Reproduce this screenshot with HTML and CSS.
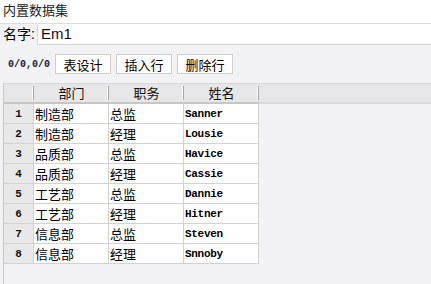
FILE: index.html
```html
<!DOCTYPE html>
<html lang="zh">
<head>
    <meta charset="UTF-8">
    <title>内置数据集</title>
    <link rel="stylesheet" href="styles.css">
</head>
<body>
    <div class="title">内置数据集</div>

    <div class="name-row">
        <label class="name-label">名字:</label>
        <div class="name-input">Em1</div>
    </div>

    <div class="toolbar">
        <span class="pos">0/0,0/0</span>
        <button class="btn">表设计</button>
        <button class="btn">插入行</button>
        <button class="btn">删除行</button>
    </div>

    <div class="grid">
        <div class="grid-head">
            <div class="hcell corner"></div>
            <div class="hcell">部门</div>
            <div class="hcell">职务</div>
            <div class="hcell">姓名</div>
            <div class="hrest"></div>
        </div>
        <div class="row"><div class="num">1</div><div class="cell">制造部</div><div class="cell">总监</div><div class="cell en">Sanner</div></div>
        <div class="row"><div class="num">2</div><div class="cell">制造部</div><div class="cell">经理</div><div class="cell en">Lousie</div></div>
        <div class="row"><div class="num">3</div><div class="cell">品质部</div><div class="cell">总监</div><div class="cell en">Havice</div></div>
        <div class="row"><div class="num">4</div><div class="cell">品质部</div><div class="cell">经理</div><div class="cell en">Cassie</div></div>
        <div class="row"><div class="num">5</div><div class="cell">工艺部</div><div class="cell">总监</div><div class="cell en">Dannie</div></div>
        <div class="row"><div class="num">6</div><div class="cell">工艺部</div><div class="cell">经理</div><div class="cell en">Hitner</div></div>
        <div class="row"><div class="num">7</div><div class="cell">信息部</div><div class="cell">总监</div><div class="cell en">Steven</div></div>
        <div class="row"><div class="num">8</div><div class="cell">信息部</div><div class="cell">经理</div><div class="cell en">Snnoby</div></div>
    </div>
</body>
</html>
```

FILE: styles.css
```css
* {
    margin: 0;
    padding: 0;
    box-sizing: border-box;
}

body {
    background-color: #f2f2f4;
    font-family: 'Liberation Sans', 'Noto Sans CJK SC', sans-serif;
    color: #000;
    height: 284px;
    overflow: hidden;
}

.title {
    height: 24px;
    line-height: 22px;
    padding-left: 3px;
    font-size: 13px;
    color: #222;
    background-color: #fff;
    border-bottom: 1px solid #dcdcdc;
}

.name-row {
    display: flex;
    align-items: stretch;
    height: 21px;
}

.name-label {
    width: 37px;
    padding-left: 3px;
    font-size: 14px;
    line-height: 20px;
}

.name-input {
    flex: 1;
    background-color: #fff;
    border-left: 1px solid #dadada;
    border-bottom: 1px solid #d4d4d4;
    padding-left: 3px;
    font-size: 15px;
    line-height: 20px;
    color: #1a0a0a;
}

.toolbar {
    display: flex;
    align-items: center;
    padding: 9px 0 0 8px;
    height: 29px;
}

.pos {
    width: 47px;
    font-family: 'Liberation Mono', monospace;
    font-size: 10px;
    font-weight: bold;
    color: #102040;
}

.btn {
    width: 56px;
    height: 20px;
    margin-right: 5px;
    background-color: #fff;
    border: 1px solid #cfcfcf;
    font-family: 'Noto Sans CJK SC', sans-serif;
    font-size: 13px;
    line-height: 17px;
    color: #000;
}

.grid {
    margin: 9px 0 0 3px;
    height: 201px;
    border-left: 1px solid #c8c8c8;
    border-top: 1px solid #d8d8d8;
}

.grid-head {
    display: flex;
    height: 20px;
    background-color: #e6e6e6;
}

.hcell {
    position: relative;
    width: 75px;
    height: 20px;
    text-align: center;
    font-family: 'Noto Sans CJK SC', sans-serif;
    font-size: 13px;
    line-height: 18px;
    color: #111;
    border-bottom: 2px solid #c6c6c6;
}

.hcell.corner {
    width: 30px;
}

.hcell::after {
    content: '';
    position: absolute;
    right: 0;
    top: 2px;
    height: 14px;
    width: 1px;
    background-color: #a8a8a8;
    box-shadow: -1px 0 0 #fafafa;
}

.hrest {
    flex: 1;
    border-bottom: 2px solid #dadada;
}

.row {
    display: flex;
    height: 20px;
}

.num {
    width: 30px;
    background-color: #e8e8e8;
    border-right: 1px solid #d2d2d2;
    border-bottom: 1px solid #d2d2d2;
    text-align: center;
    font-family: 'Liberation Mono', monospace;
    font-size: 11px;
    font-weight: bold;
    line-height: 21px;
    color: #111;
}

.cell {
    width: 75px;
    background-color: #fff;
    border-right: 1px solid #d2d2d2;
    border-bottom: 1px solid #d2d2d2;
    padding-left: 1px;
    font-family: 'Noto Sans CJK SC', sans-serif;
    font-size: 13px;
    line-height: 19px;
}

.cell.en {
    font-family: 'Liberation Mono', monospace;
    font-size: 11px;
    font-weight: bold;
    letter-spacing: -0.3px;
    line-height: 21px;
}
```
